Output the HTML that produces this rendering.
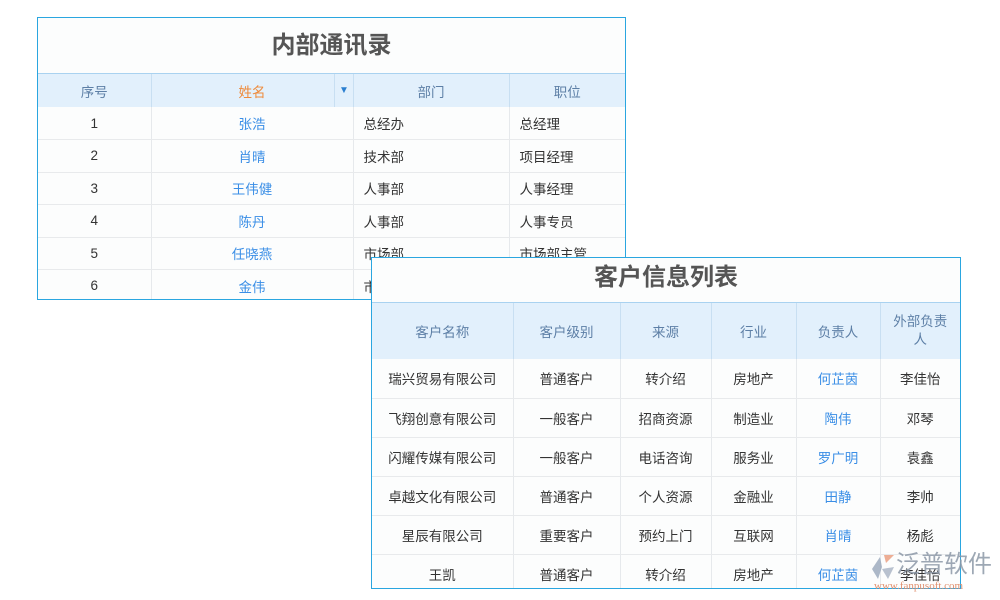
<!DOCTYPE html>
<html><head><meta charset="utf-8"><style>
*{margin:0;padding:0;box-sizing:border-box}
body{width:1000px;height:600px;background:#fff;position:relative;overflow:hidden;font-family:"Liberation Sans","Noto Sans CJK SC",sans-serif;font-size:13.5px;color:#333}
.box{position:absolute;background:#fcfdfd;border:1px solid #2aa6e0;overflow:hidden}
.title{text-align:center;font-weight:bold;color:#555;border-bottom:1px solid #a9d2f0}
table{border-collapse:collapse;width:100%;table-layout:fixed}
td{border-right:1px solid #e6e9ec;border-bottom:1px solid #e8eaec;text-align:center;padding:0}
td:last-child{border-right:none}
th{background:#e2f0fc;color:#5d7fa6;font-weight:normal;border-right:1px solid #c8dff2;text-align:center;padding:0}
th:last-child{border-right:none}
.l{text-align:left;padding-left:10px}
.b{color:#3a8ee6}
</style></head><body>
<div class="box" style="left:37px;top:17px;width:589px;height:283px">
<div class="title" style="height:56px;line-height:56px;font-size:24px">内部通讯录</div>
<table>
<colgroup><col style="width:113px"><col style="width:202px"><col style="width:156px"><col></colgroup>
<tr style="height:33px"><th>序号</th><th style="color:#ee8a3a;position:relative">姓名<span style="position:absolute;left:182px;top:0;bottom:0;border-left:1px solid #c8dff2;width:20px;color:#2a7fd0;font-size:10px;line-height:33px">▼</span></th><th>部门</th><th>职位</th></tr>
<tr style="height:32.5px"><td>1</td><td class="b">张浩</td><td class="l">总经办</td><td class="l">总经理</td></tr>
<tr style="height:32.5px"><td>2</td><td class="b">肖晴</td><td class="l">技术部</td><td class="l">项目经理</td></tr>
<tr style="height:32.5px"><td>3</td><td class="b">王伟健</td><td class="l">人事部</td><td class="l">人事经理</td></tr>
<tr style="height:32.5px"><td>4</td><td class="b">陈丹</td><td class="l">人事部</td><td class="l">人事专员</td></tr>
<tr style="height:32.5px"><td>5</td><td class="b">任晓燕</td><td class="l">市场部</td><td class="l">市场部主管</td></tr>
<tr style="height:32.5px"><td>6</td><td class="b">金伟</td><td class="l">市场部</td><td class="l">市场专员</td></tr>
</table></div>
<div class="box" style="left:371px;top:257px;width:590px;height:332px">
<div class="title" style="height:45px;line-height:40px;font-size:24px">客户信息列表</div>
<table>
<colgroup><col style="width:141px"><col style="width:107px"><col style="width:91px"><col style="width:85px"><col style="width:84px"><col></colgroup>
<tr style="height:56px"><th>客户名称</th><th>客户级别</th><th>来源</th><th>行业</th><th>负责人</th><th style="line-height:18px;padding:0 8px">外部负责人</th></tr>
<tr style="height:39px"><td>瑞兴贸易有限公司</td><td>普通客户</td><td>转介绍</td><td>房地产</td><td class="b">何芷茵</td><td>李佳怡</td></tr>
<tr style="height:39px"><td>飞翔创意有限公司</td><td>一般客户</td><td>招商资源</td><td>制造业</td><td class="b">陶伟</td><td>邓琴</td></tr>
<tr style="height:39px"><td>闪耀传媒有限公司</td><td>一般客户</td><td>电话咨询</td><td>服务业</td><td class="b">罗广明</td><td>袁鑫</td></tr>
<tr style="height:39px"><td>卓越文化有限公司</td><td>普通客户</td><td>个人资源</td><td>金融业</td><td class="b">田静</td><td>李帅</td></tr>
<tr style="height:39px"><td>星辰有限公司</td><td>重要客户</td><td>预约上门</td><td>互联网</td><td class="b">肖晴</td><td>杨彪</td></tr>
<tr style="height:39px"><td>王凯</td><td>普通客户</td><td>转介绍</td><td>房地产</td><td class="b">何芷茵</td><td>李佳怡</td></tr>
</table></div>
<svg style="position:absolute;left:870px;top:553px" width="26" height="28" viewBox="0 0 26 28"><path d="M14 2 L24 2 L16 10 Z" fill="#e89a7a" opacity=".8"/><path d="M10 4 L2 16 L8 26 L12 14 Z" fill="#8a9ab0" opacity=".7"/><path d="M12 16 L24 14 L18 26 Z" fill="#8a9ab0" opacity=".6"/></svg>
<div style="position:absolute;left:896px;top:551px;font-size:24px;line-height:28px;color:#8d99a8;opacity:.85;white-space:nowrap">泛普软件</div>
<div style="position:absolute;left:874px;top:580px;font-size:11px;line-height:12px;color:#e0906e;font-family:'Liberation Serif',serif;white-space:nowrap">www.fanpusoft.com</div>
</body></html>
